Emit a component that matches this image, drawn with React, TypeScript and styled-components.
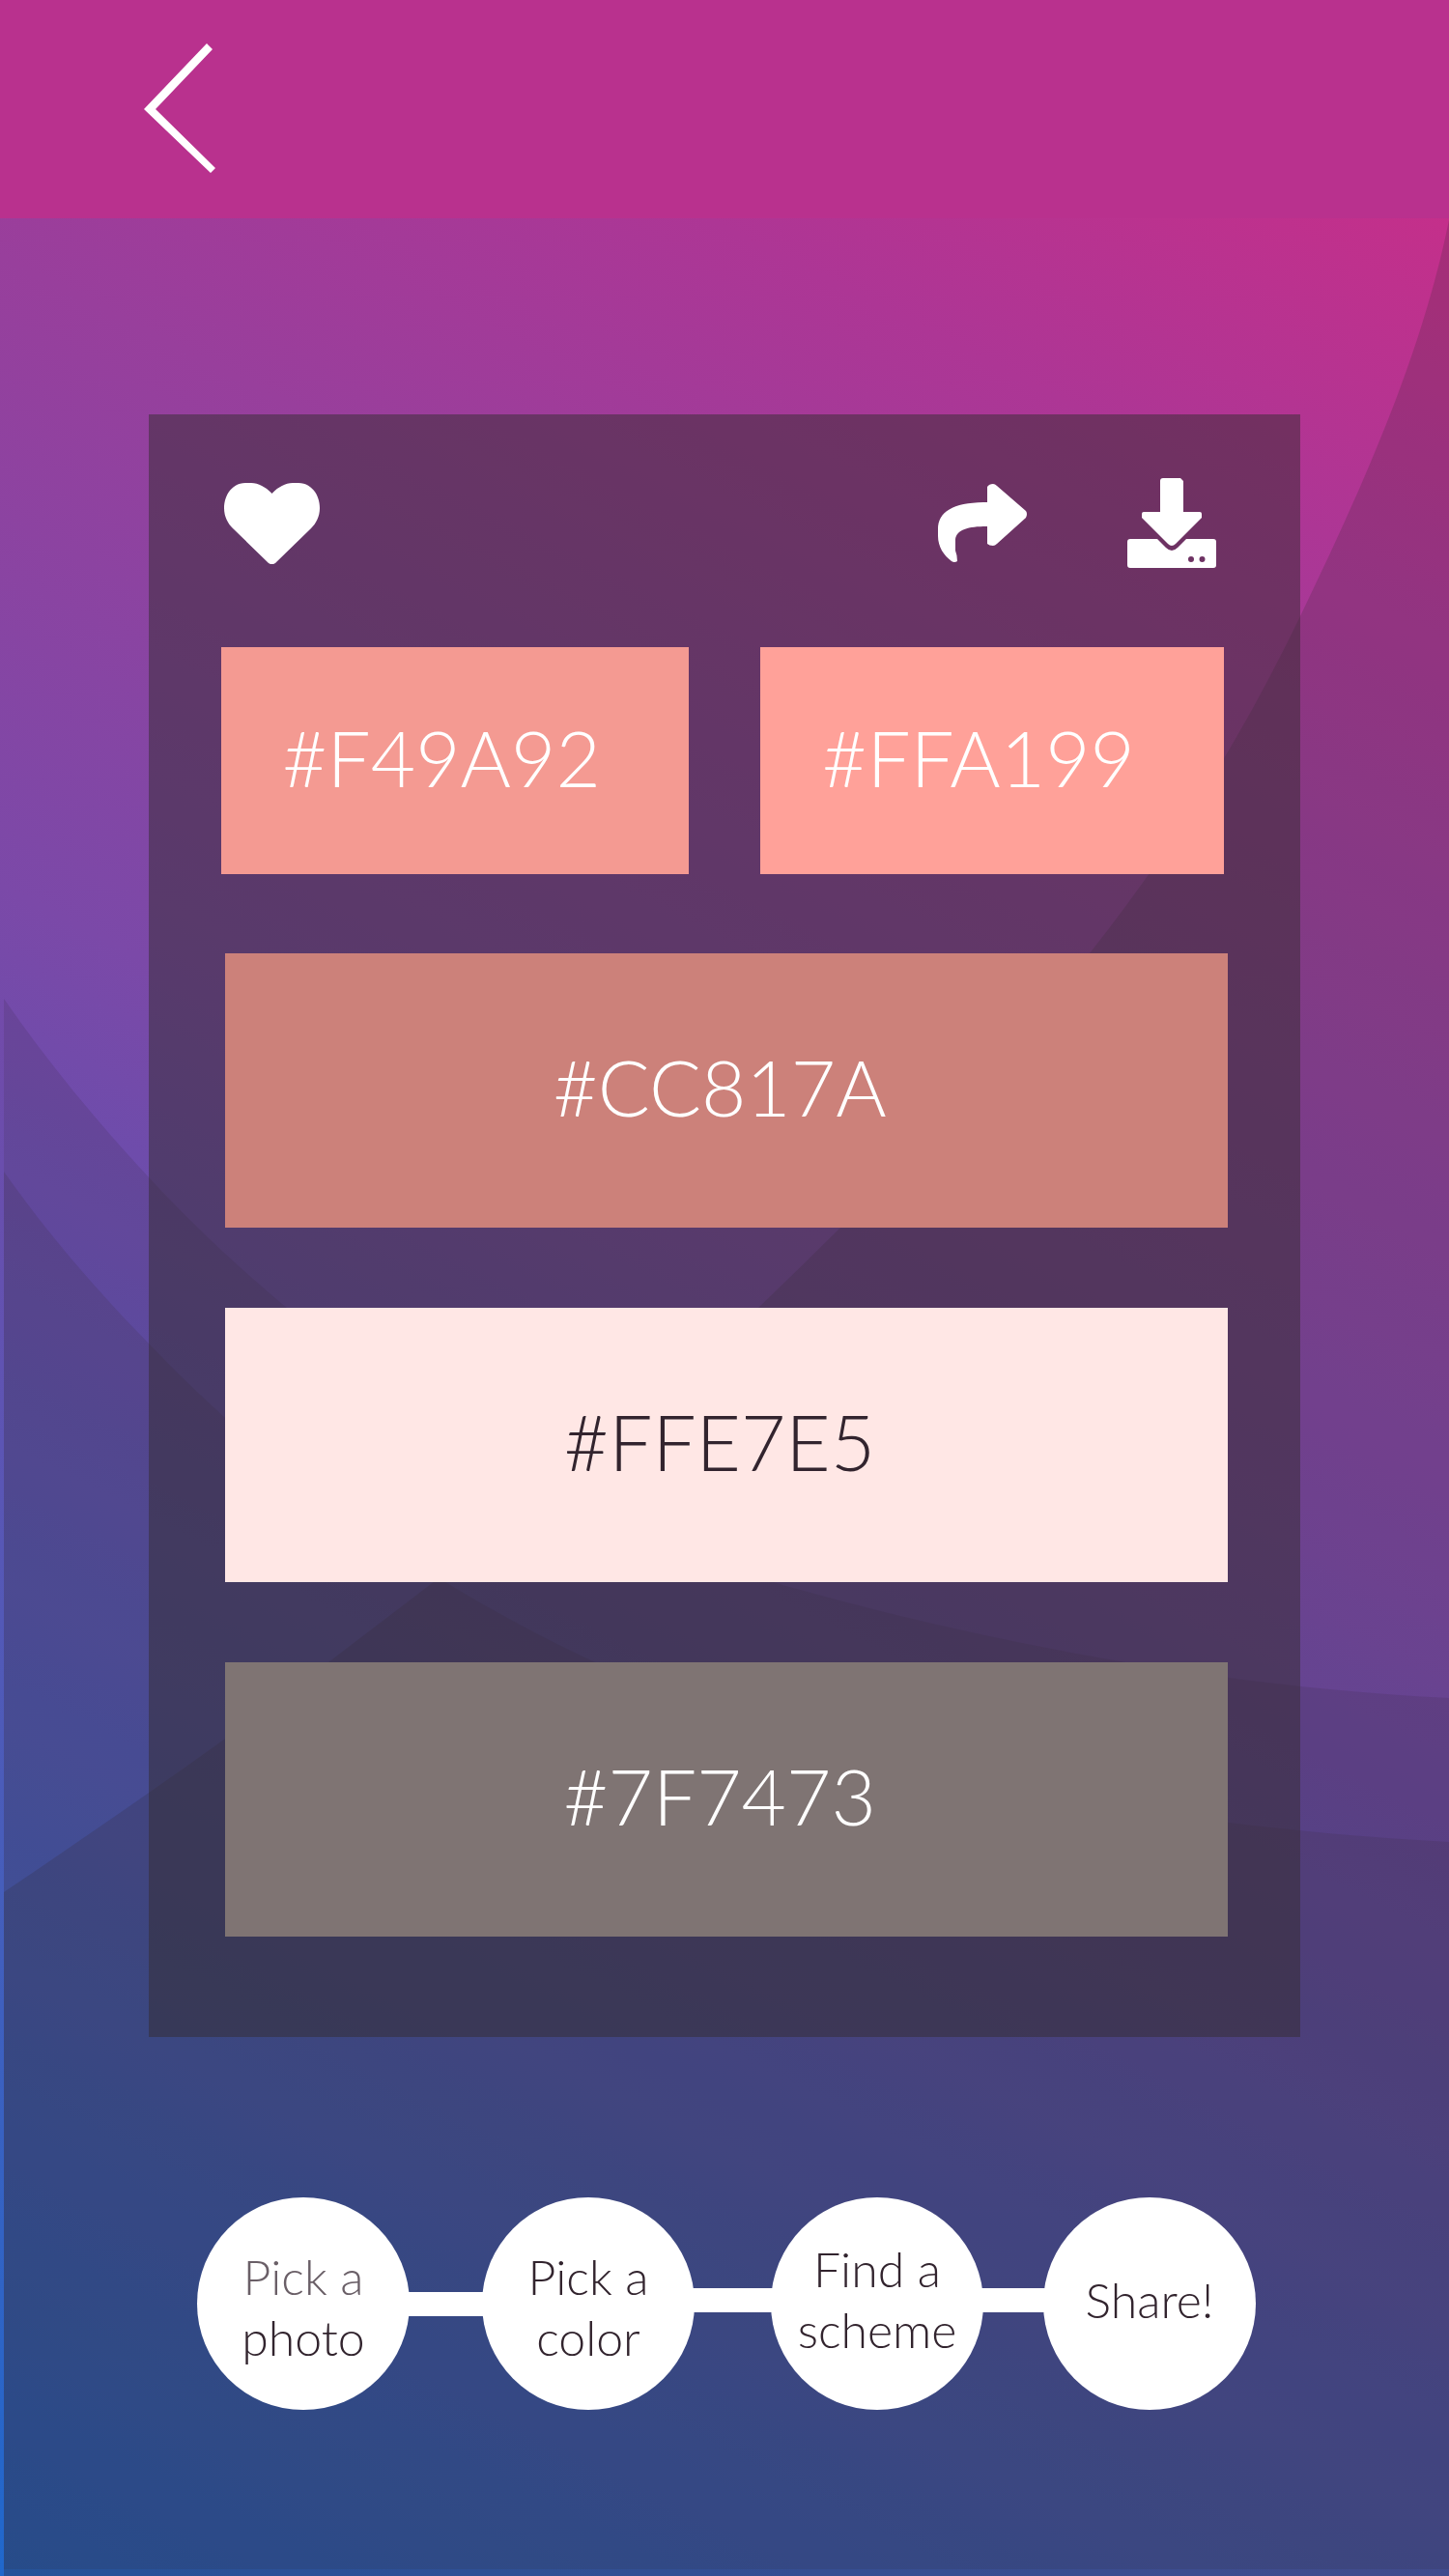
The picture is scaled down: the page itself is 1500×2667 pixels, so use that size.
import React from "react";
import styled, { createGlobalStyle } from "styled-components";

const GlobalStyle = createGlobalStyle`
  *, *::before, *::after { box-sizing: border-box; }
  body { margin: 0; font-family: Lato, "Open Sans", sans-serif; }
`;

const Screen = styled.div`
  position: relative;
  min-height: 100vh;
  overflow: hidden;
  background: linear-gradient(
    27deg,
    #2068cc 0%,
    #465ebb 21%,
    #5a56b5 33%,
    #6e4cab 45%,
    #7b49a8 51%,
    #983f9c 70%,
    #ad3695 82%,
    #c52f8a 94%
  );
`;

const Backdrop = styled.svg`
  position: absolute;
  inset: 0;
  width: 100%;
  height: 100%;
  fill: #34262f;
`;

const Header = styled.header`
  position: relative;
  display: flex;
  padding: 45px 149px 47px;
  background: #b9318e;
`;

const IconButton = styled.button`
  display: flex;
  padding: 0;
  border: 0;
  background: none;
  color: #ffffff;
  cursor: pointer;

  svg { display: block; fill: currentColor; }
`;

const Main = styled.main`
  position: relative;
  padding: 203px 154px 172px;
`;

const Panel = styled.section`
  display: flex;
  flex-direction: column;
  gap: 82px;
  padding: 66px 75px 104px;
  background: rgba(52, 44, 48, 0.5);
`;

const Toolbar = styled.div`
  display: flex;
  align-items: center;
  gap: 104px;
  height: 93px;
  padding: 0 12px 0 3px;
`;

const Spacer = styled.div`
  flex: 1;
`;

const SwatchPair = styled.div`
  display: grid;
  grid-template-columns: 484fr 480fr;
  gap: 74px;
  margin-right: 4px;
`;

const SwatchStack = styled.div`
  display: flex;
  flex-direction: column;
  gap: 83px;
  margin-left: 4px;
`;

const Swatch = styled.button<{ $color: string; $small?: boolean; $dark?: boolean }>`
  display: flex;
  align-items: center;
  justify-content: center;
  height: ${(p) => (p.$small ? 235 : 284)}px;
  padding: 0 ${(p) => (p.$small ? 28 : 14)}px 8px 0;
  border: 0;
  background: ${(p) => p.$color};
  color: ${(p) => (p.$dark ? "#32242e" : "#ffffff")};
  font: 300 80px/96px Lato, sans-serif;
  cursor: pointer;
`;

const Steps = styled.ol`
  display: flex;
  align-items: center;
  margin: 166px 46px 0 50px;
  padding: 0;
  list-style: none;
`;

const Step = styled.li<{ $grow?: number; $raised?: boolean }>`
  display: flex;
  align-items: center;
  flex: ${(p) => p.$grow || 0} 0 220px;

  &:not(:last-child)::after {
    content: "";
    flex: 1;
    height: 25px;
    margin: 0 -2px;
    margin-bottom: ${(p) => (p.$raised ? 8 : 0)}px;
    background: #ffffff;
  }
`;

const StepLink = styled.a<{ $lift?: boolean }>`
  display: flex;
  align-items: center;
  justify-content: center;
  flex: none;
  width: 220px;
  height: 220px;
  padding: ${(p) => (p.$lift ? "0 0 8px" : "8px 0 0")};
  border-radius: 50%;
  background: #ffffff;
  color: #32242e;
  font-size: 50px;
  font-weight: 300;
  line-height: 63px;
  text-align: center;
  text-decoration: none;
`;

const Faded = styled.span`
  color: #6a5f67;
`;

export default function App() {
  return (
    <Screen>
      <GlobalStyle />
      <Backdrop viewBox="0 0 1500 2667" preserveAspectRatio="none" aria-hidden="true">
        <path
          opacity="0.2"
          d="M1500 228C1471 371 1409 507 1346 638C1287 761 1213 880 1128 987C1024 1117 905 1239 785 1354C647 1486 493 1605 340 1721C231 1804 118 1882 4 1959V2667H1500Z"
        />
        <path
          opacity="0.14"
          d="M4 1034C49 1099 100 1161 154 1219C331 1409 563 1560 810 1641C1034 1704 1267 1746 1500 1758V2667H4Z"
        />
        <path
          opacity="0.15"
          d="M4 1213C49 1277 100 1336 154 1391C331 1577 563 1720 810 1796C1034 1857 1267 1895 1500 1907V2660H4Z"
        />
      </Backdrop>

      <Header>
        <IconButton type="button" aria-label="Back">
          <svg width="74" height="134" viewBox="0 0 74 134">
            <path d="M65 0L71 6L12 68L74 129L69 134L0 68Z" />
          </svg>
        </IconButton>
      </Header>

      <Main>
        <Panel aria-label="Color scheme">
          <Toolbar>
            <IconButton type="button" aria-label="Favorite">
              <svg width="99" height="84" viewBox="0 0 99 84">
                <path d="M49.5 11C44 5 36 0 28 0H22C9 0 0 12 0 26C0 35 4 42 9 47L46 83Q49.5 85.5 53 83L90 47C95 42 99 35 99 26C99 12 90 0 77 0H71C63 0 55 5 49.5 11Z" />
              </svg>
            </IconButton>
            <Spacer />
            <IconButton type="button" aria-label="Share">
              <svg width="92" height="81" viewBox="0 0 92 81">
                <path d="M51 3Q53 0 57 0Q59 0 61 2L91 28Q93 31 91 35L61 62Q59 64 57 64Q53 64 51 62V44C30 44 18 48 18 59V69Q20 74 20 80Q17 82 14 80C6 74 0 65 0 54V47C0 28 17 19 51 19Z" />
              </svg>
            </IconButton>
            <IconButton type="button" aria-label="Download">
              <svg width="92" height="93" viewBox="0 0 92 93">
                <path d="M34 3Q34 0 37 0H55L58 3V35H75Q77 35 77 37V41L50 68Q46 72 42 68L15 41V37Q15 35 17 35H34Z" />
                <path
                  fillRule="evenodd"
                  d="M3 63H31L40 72Q46 78 52 72L61 63H89Q92 63 92 66V90Q92 93 89 93H3Q0 93 0 90V66Q0 63 3 63ZM66 81A3 3 0 1 0 66 87A3 3 0 1 0 66 81ZM77.500 81A3 3 0 1 0 77.500 87A3 3 0 1 0 77.500 81Z"
                />
              </svg>
            </IconButton>
          </Toolbar>

          <SwatchPair>
            <Swatch type="button" $color="#f49a92" $small>#F49A92</Swatch>
            <Swatch type="button" $color="#ffa199" $small>#FFA199</Swatch>
          </SwatchPair>
          <SwatchStack>
            <Swatch type="button" $color="#cc817a">#CC817A</Swatch>
            <Swatch type="button" $color="#ffe7e5" $dark>#FFE7E5</Swatch>
            <Swatch type="button" $color="#7f7473">#7F7473</Swatch>
          </SwatchStack>
        </Panel>

        <Steps>
          <Step $grow={75}>
            <StepLink href="#photo">
              <span>
                <Faded>Pick a</Faded>
                <br />
                photo
              </span>
            </StepLink>
          </Step>
          <Step $grow={79} $raised>
            <StepLink href="#color">
              Pick a
              <br />
              color
            </StepLink>
          </Step>
          <Step $grow={62} $raised>
            <StepLink href="#scheme" $lift>
              Find a
              <br />
              scheme
            </StepLink>
          </Step>
          <Step>
            <StepLink href="#share" $lift>Share!</StepLink>
          </Step>
        </Steps>
      </Main>
    </Screen>
  );
}
